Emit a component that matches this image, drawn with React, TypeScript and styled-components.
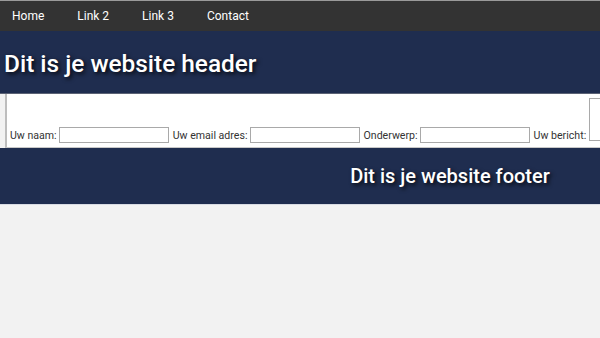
import { createGlobalStyle } from "styled-components";
import styled from "styled-components";
import { Fragment } from "react";

const GlobalStyle = createGlobalStyle`
  html, body {
    margin: 0;
    padding: 0;
    background: #f2f2f2;
    font-family: Roboto, "Liberation Sans", Arial, sans-serif;
  }
`;

const Page = styled.div`
  width: 900px;
  border-top: 1px solid #9a9a9a;
`;

const Nav = styled.nav`
  display: flex;
  align-items: center;
  gap: 33px;
  height: 30px;
  padding-left: 12px;
  background: #333333;
`;

const NavLink = styled.a`
  color: #ffffff;
  font-size: 12px;
  text-decoration: none;
  cursor: pointer;
`;

const Banner = styled.header`
  display: flex;
  align-items: center;
  box-sizing: border-box;
  height: 63px;
  padding: 3px 0 0 4px;
  background: #1f2d4f;
  border-bottom: 1px solid #5b6275;
`;

const Title = styled.h1<{ $size: number }>`
  margin: 0;
  color: #ffffff;
  font-size: ${(p) => p.$size}px;
  font-weight: 500;
  text-shadow: 2px 2px 4px rgba(0, 0, 0, 0.85);
`;

const Form = styled.form`
  display: flex;
  align-items: flex-end;
  height: 46px;
  margin-left: 5px;
  padding: 3px 0 4px 3px;
  background: #ffffff;
  border-left: 2px solid #bdbdbd;
  border-bottom: 1px solid #c8c8c8;
`;

const Label = styled.label`
  margin: 0 2px 1px 0;
  color: #333333;
  font-size: 10.6px;
  line-height: 13px;
  white-space: nowrap;
`;

const Field = styled.input`
  box-sizing: border-box;
  width: 110px;
  height: 16px;
  margin-right: 4px;
  padding: 0 2px;
  border: 1px solid #a9a9a9;
  background: #ffffff;
  font-size: 11px;
`;

const Message = styled.textarea`
  box-sizing: border-box;
  width: 300px;
  height: 43px;
  margin: 0 0 2px 1px;
  border: 1px solid #a9a9a9;
  resize: none;
`;

const Footer = styled.footer`
  display: flex;
  align-items: center;
  justify-content: center;
  height: 56px;
  background: #1f2d4f;
  border-bottom: 1px solid #d8dbe3;
`;

const fields = [
  { id: "naam", label: "Uw naam:" },
  { id: "email", label: "Uw email adres:" },
  { id: "onderwerp", label: "Onderwerp:" },
];

export default function App() {
  return (
    <>
      <GlobalStyle />
      <Page>
        <Nav>
          <NavLink>Home</NavLink>
          <NavLink>Link 2</NavLink>
          <NavLink>Link 3</NavLink>
          <NavLink>Contact</NavLink>
        </Nav>
        <Banner>
          <Title $size={24.4}>Dit is je website header</Title>
        </Banner>
        <Form>
          {fields.map((f) => (
            <Fragment key={f.id}>
              <Label htmlFor={f.id}>{f.label}</Label>
              <Field id={f.id} type="text" />
            </Fragment>
          ))}
          <Label htmlFor="bericht">Uw bericht:</Label>
          <Message id="bericht" />
        </Form>
        <Footer>
          <Title $size={20}>Dit is je website footer</Title>
        </Footer>
      </Page>
    </>
  );
}
